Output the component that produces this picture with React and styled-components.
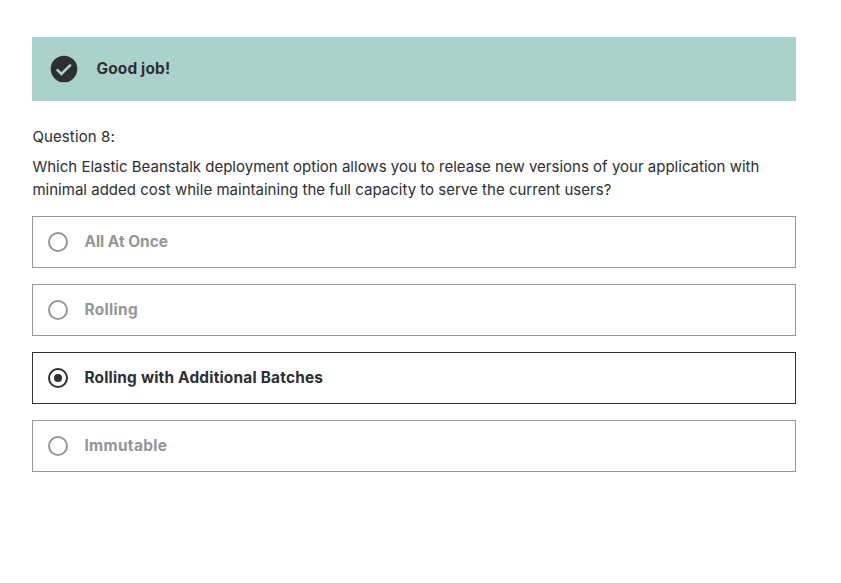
import React from "react";
import styled, { createGlobalStyle } from "styled-components";

const Global = createGlobalStyle`
  * { box-sizing: border-box; }
  body { margin: 0; background: #fff; color: #2d2f31; font-family: Inter, "Liberation Sans", sans-serif; font-size: 15px; overflow: hidden; }
`;

const Page = styled.main`
  height: 584px;
  padding: 37px 45px 0 32px;
  border-bottom: 1px solid #d1d2d3;
`;

const Banner = styled.div`
  height: 64px;
  display: flex;
  align-items: center;
  padding-left: 18px;
  gap: 18px;
  background: #abd2ca;
`;

const Line = styled.span`
  display: block;
  white-space: nowrap;
  padding-left: 0.4px;
  letter-spacing: ${(p) => p.$spacing || 0}px;
`;

const BoldLine = styled(Line)`
  font-size: 15.4px;
  font-weight: 700;
  padding-bottom: 2px;
`;

const Label = styled.p`
  margin: 24px 0 0;
  line-height: 23px;
`;

const Question = styled.p`
  margin: 7px 0 15px;
  line-height: 23px;
`;

const Options = styled.div`
  display: grid;
  gap: 16px;
`;

const Option = styled.div`
  height: 52px;
  display: flex;
  align-items: center;
  gap: 16px;
  padding-left: 15px;
  border: 1px solid ${(p) => (p.$on ? "#2d2f31" : "#959696")};
  color: ${(p) => (p.$on ? "#2d2f31" : "#959696")};
`;

const Radio = styled.span`
  width: 20px;
  height: 20px;
  border: 2px solid currentColor;
  border-radius: 50%;
  display: grid;
  place-items: center;
  &::after {
    content: "";
    width: 8px;
    height: 8px;
    border-radius: 50%;
    background: ${(p) => (p.$on ? "currentColor" : "transparent")};
  }
`;

const options = [
  { text: "All At Once", spacing: 0 },
  { text: "Rolling", spacing: 0.34 },
  { text: "Rolling with Additional Batches", spacing: 0.21, on: true },
  { text: "Immutable", spacing: 0.36 },
];

export default function App() {
  return (
    <>
      <Global />
      <Page>
        <Banner>
          <svg width="28" height="28" viewBox="0 0 28 28">
            <circle cx="14" cy="14" r="13.3" fill="#2d2f31" />
            <path d="M6.8 14.4l4.6 4.6 9.4-9.4" fill="none" stroke="#abd2ca" strokeWidth="2.6" />
          </svg>
          <BoldLine $spacing={0.19}>Good job!</BoldLine>
        </Banner>
        <Label><Line $spacing={0.12}>Question 8:</Line></Label>
        <Question>
          <Line $spacing={0.008}>Which Elastic Beanstalk deployment option allows you to release new versions of your application with</Line>
          <Line $spacing={0.016}>minimal added cost while maintaining the full capacity to serve the current users?</Line>
        </Question>
        <Options>
          {options.map((o) => (
            <Option key={o.text} $on={o.on}>
              <Radio $on={o.on} />
              <BoldLine $spacing={o.spacing}>{o.text}</BoldLine>
            </Option>
          ))}
        </Options>
      </Page>
    </>
  );
}
